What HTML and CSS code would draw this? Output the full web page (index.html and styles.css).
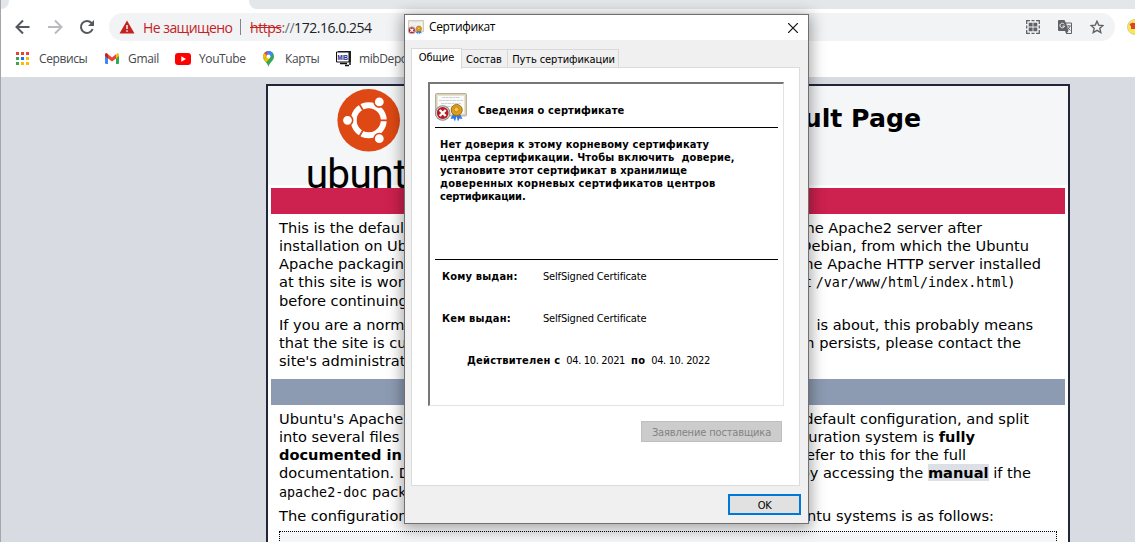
FILE: index.html
```
<!DOCTYPE html>
<html lang="ru">
<head>
<meta charset="utf-8">
<title>Сертификат</title>
<link rel="stylesheet" href="styles.css">
</head>
<body>
<svg width="0" height="0" class="defs">
  <symbol id="cert" viewBox="0 0 32 29">
    <rect x="0.5" y="0.5" width="31" height="22.5" rx="1" fill="#d9cfba" stroke="#b9ae98"/>
    <rect x="2.5" y="2.5" width="27" height="18.5" fill="#fbfbf8" stroke="#e8e2d2"/>
    <path d="M7 4.500h18M4 7.500h24M6 10.500h20M12 13.500h8" stroke="#ccd1dc" stroke-width="1" stroke-dasharray="3 .5"/>
    <path d="M18.500 20l-3 6 3-.5 1.500 3 2-7zM24.500 20l3 6-3-.5-1.500 3-2-7z" fill="#2f78e6"/>
    <circle cx="21.700" cy="17" r="5.500" fill="#dc9f22" stroke="#a66c0c"/>
    <circle cx="21.500" cy="16.500" r="2.500" fill="#f4c64c" stroke="#b67a12" stroke-width=".8"/>
    <circle cx="7.700" cy="20" r="7.700" fill="#8c8c8c"/>
    <circle cx="7.700" cy="20" r="6.800" fill="#dadada"/>
    <circle cx="7.700" cy="20" r="5.900" fill="#b81c24"/>
    <path d="M4.700 17l6 6M10.700 17l-6 6" stroke="#fff" stroke-width="2.400"/>
  </symbol>
</svg>
<div class="browser">
  <div class="tabstrip"><div class="tab-edge"></div><div class="tab-rest"></div></div>
  <div class="toolbar">
    <svg class="nav" width="16" height="16" viewBox="0 0 16 16" fill="none" stroke="#55595e" stroke-width="2"><path d="M14.500 8H2M8 1.500L1.500 8 8 14.500"/></svg>
    <svg class="nav" width="16" height="16" viewBox="0 0 16 16" fill="none" stroke="#b9bbbe" stroke-width="2"><path d="M1 8h12.500M8 1.500L14.500 8 8 14.500"/></svg>
    <svg class="nav" width="16" height="16" viewBox="0 0 16 16" fill="none" stroke="#55595e" stroke-width="2"><path d="M13.600 10A6 6 0 1 1 12.500 4L14 5.500"/><path d="M15 1v6H9z" fill="#55595e" stroke="none"/></svg>
    <div class="omnibox">
      <svg width="16" height="14" viewBox="0 0 16 14"><path d="M8 0.500L15.500 13.500H.5z" fill="#c5221f"/><path d="M8 5v4M8 10.300v1.500" stroke="#f1f3f4" stroke-width="1.500"/></svg>
      <span class="unsafe">Не защищено</span>
      <span class="sep"></span>
      <span class="url"><s>https</s><i>://</i>172.16.0.254</span>
      <span class="actions">
        <svg width="14" height="14" viewBox="0 0 14 14" fill="none" stroke="#5f6368"><path d="M.7 4V.7H4M5.500.7h3M10 .7h3.300V4M13.300 5.500v3M13.300 10v3.300H10M8.500 13.300h-3M4 13.300H.7V10M.7 8.500v-3" stroke-width="1.300"/><path d="M2.700 2.700h3.900v3.900H2.700zM7.400 2.700h3.900v3.900H7.400zM2.700 7.400h3.900v3.900H2.700zM7.400 7.400h3.900v3.900H7.400z" fill="#5f6368" stroke="none"/></svg>
        <svg width="14" height="14" viewBox="0 0 14 14"><path d="M1 0h5.500l1.200 2.500H13q1 0 1 1V13q0 1-1 1H8.200L7 11H1q-1 0-1-1V1q0-1 1-1z" fill="#5f6368"/><path d="M8.200 3.500H13V13H9l1.500-2z" fill="#f1f3f4"/><path d="M6.200 4.300A2.300 2.300 0 1 0 6.500 6H4.500" fill="none" stroke="#f1f3f4"/><path d="M8.800 6h4M10.800 5v1M12 6.200q-.6 2.400-2.600 3.600M9.700 7.200q1 2 2.800 3.200" fill="none" stroke="#5f6368" stroke-width=".9"/></svg>
        <svg width="14" height="14" viewBox="0 0 14 14"><path d="M7 1.200l1.700 3.900 4.300.4-3.200 2.800 1 4.200L7 10.300l-3.800 2.200 1-4.200L1 5.500l4.300-.4z" fill="none" stroke="#5f6368" stroke-width="1.400"/></svg>
      </span>
    </div>
    <svg class="ext" width="8" height="16" viewBox="0 0 8 16"><circle cx="8" cy="8" r="7.500" fill="#fbe94c" stroke="#d9cf94"/><path d="M3 6l2-1v5M7 4v6" stroke="#e0412f" stroke-width="2" fill="none"/></svg>
  </div>
  <div class="bookmarks">
    <span class="bm b1"><svg width="13" height="13" viewBox="0 0 13 13"><path d="M0 0h3v3H0zM5 0h3v3H5zM10 0h3v3h-3z" fill="#ea4335"/><path d="M0 5h3v3H0zM0 10h3v3H0z" fill="#34a853"/><path d="M5 5h3v3H5z" fill="#1a73e8"/><path d="M10 5h3v3h-3zM5 10h3v3H5zM10 10h3v3h-3z" fill="#fbbc04"/></svg>Сервисы</span>
    <span class="bm b2"><svg width="14" height="11" viewBox="0 0 14 11"><path d="M0 2v8q0 1 1 1h2V4z" fill="#4285f4"/><path d="M14 2v8q0 1-1 1h-2V4z" fill="#34a853"/><path d="M11 1.500L12 .5q2-1 2 1.500v1l-3 2.500z" fill="#fbbc04"/><path d="M0 3V2Q0-.5 2 .5l5 4 4-3.200v4.200L7 8.500z" fill="#ea4335"/><path d="M0 2Q0-.5 2 .5l1 .8v4.200L0 3z" fill="#c5221f"/></svg>Gmail</span>
    <span class="bm b3"><svg width="16" height="12" viewBox="0 0 16 12"><rect width="16" height="12" rx="3" fill="#f00"/><path d="M6.300 3.300v5.400L11 6z" fill="#fff"/></svg>YouTube</span>
    <span class="bm b4"><svg width="11" height="16" viewBox="0 0 11 16"><path d="M0 5.500a5.500 5.500 0 0 1 11 0C11 10 6.500 11 5.500 16 4.500 11 0 10 0 5.500z" fill="#34a853"/><path d="M0 5.500A5.500 5.500 0 0 1 1.500 2L4 4 1 8.500Q0 7 0 5.500z" fill="#fbbc04"/><path d="M1.300 2A5.500 5.500 0 0 1 4 .2L7 3 4 5z" fill="#ea4335"/><path d="M3.800.2a5.500 5.500 0 0 1 6.500 2.500L7 6 4 4z" fill="#4285f4"/><path d="M1 8.500L5 4l2 3-4 4.500z" fill="#fbbc04"/><circle cx="5.500" cy="5.500" r="2" fill="#fff"/></svg>Карты</span>
    <span class="bm b5"><svg width="16" height="16" viewBox="0 0 16 16"><path d="M2 0h13v11H2z" fill="#222"/><path d="M.5 1h12.500v10H.5z" fill="#fff" stroke="#111"/><text x="1.500" y="9.300" class="mib" textLength="10.500" lengthAdjust="spacingAndGlyphs">MIB</text><path d="M4 12.500h7M9 14.500h4M14 11v3" stroke="#111" stroke-width="1.500"/></svg>mibDepo</span>
  </div>
  <div class="viewport">
    <main class="page">
      <header class="head">
        <svg class="logo" width="105" height="102" viewBox="0 0 105 102">
          <circle cx="66.700" cy="34.300" r="31.300" fill="#dd4814"/>
          <circle cx="66.700" cy="34.300" r="15" fill="none" stroke="#fff" stroke-width="6"/>
          <path d="M66.700 34.300H88M66.700 34.300L56 15.800M66.700 34.300L56 52.800" stroke="#dd4814" stroke-width="1.700"/>
          <circle cx="66.700" cy="34.300" r="11.600" fill="#dd4814"/>
          <g fill="#fff" stroke="#dd4814" stroke-width="1.600"><circle cx="45.500" cy="34.300" r="5.200"/><circle cx="77.300" cy="15.900" r="5.200"/><circle cx="77.300" cy="52.700" r="5.200"/></g>
          <text class="word" x="3.800 25.300 47.500 69.200 91.500" y="101.500">ubunt</text>
        </svg>
        <h1>Default Page</h1>
      </header>
      <div class="bar red"></div>
      <section>
        <p><span class="l e981"><b>This is the default</b><b>the Apache2 server after</b></span>
        <span class="l e1028"><b>installation on Ubuntu</b><b>Debian, from which the Ubuntu</b></span>
        <span class="l e1040"><b>Apache packaging is</b><b>the Apache HTTP server installed</b></span>
        <span class="l e1014"><b>at this site is working</b><b>at <code>/var/www/html/index.html</code>)</b></span>
        <span class="l low"><b>before continuing to</b></span></p>
        <p><span class="l e1032"><b>If you are a normal</b><b>is about, this probably means</b></span>
        <span class="l e1020"><b>that the site is currently</b><b>problem persists, please contact the</b></span>
        <span class="l"><b>site's administrator</b></span></p>
      </section>
      <div class="bar slate"></div>
      <section>
        <p><span class="l e1028"><b>Ubuntu's Apache2</b><b>default configuration, and split</b></span>
        <span class="l e974"><b>into several files op</b><b>configuration system is <strong>fully</strong></b></span>
        <span class="l e965"><b><strong>documented in</strong></b><b>Refer to this for the full</b></span>
        <span class="l e1030"><b>documentation. Do</b><b>by accessing the <mark>manual</mark> if the</b></span>
        <span class="l low"><b><code>apache2-doc</code> package</b></span></p>
        <p><span class="l e993"><b>The configuration lay</b><b>Ubuntu systems is as follows:</b></span></p>
      </section>
      <div class="listing"></div>
    </main>
  </div>
</div>

<div class="dialog">
  <div class="title"><svg width="16" height="15"><use href="#cert"/></svg><span>Сертификат</span>
    <svg class="close" width="10" height="10" viewBox="0 0 10 10"><path d="M0 0l10 10M10 0L0 10" stroke="#111" stroke-width="1.200"/></svg></div>
  <div class="tabs"><span class="tab on">Общие</span><span class="tab two">Состав</span><span class="tab three">Путь сертификации</span></div>
  <div class="panel">
    <div class="frame">
      <div class="info"><svg width="32" height="29"><use href="#cert"/></svg><span>Сведения о сертификате</span></div>
      <div class="message"><span class="m1">Нет доверия к этому корневому сертификату</span><span class="m2">центра сертификации. Чтобы включить&nbsp; доверие,</span><span class="m3">установите этот сертификат в хранилище</span><span class="m4">доверенных корневых сертификатов центров</span><span class="m5">сертификации.</span></div>
      <div class="field"><strong>Кому выдан:</strong><span>SelfSigned Certificate</span></div>
      <div class="field"><strong>Кем выдан:</strong><span>SelfSigned Certificate</span></div>
      <div class="dates"><strong>Действителен с</strong><span>04. 10. 2021</span><strong>по</strong><span>04. 10. 2022</span></div>
    </div>
    <div class="issuer">Заявление поставщика</div>
  </div>
  <div class="ok">OK</div>
</div>
</body>
</html>
```
FILE: styles.css
```
* { box-sizing: border-box; }
body { margin: 0; width: 1135px; height: 542px; overflow: hidden; position: relative; background: #fff; }
.defs { position: absolute; }
.browser { height: 542px; overflow: hidden; border-left: 1px solid #a6a6a6; font-family: "Open Sans", sans-serif; }
.tabstrip { height: 9px; display: flex; justify-content: space-between; }
.tab-edge { width: 8px; background: #e4e7ea; border-bottom-right-radius: 8px; }
.tab-rest { width: 886px; background: #e4e7ea; border-bottom-left-radius: 8px; }
.toolbar { height: 36px; display: flex; align-items: center; padding-left: 14px; }
.nav { margin-right: 16px; flex: none; }
.omnibox { width: 1006px; height: 28px; border-radius: 14px; background: #f1f3f4; display: flex; align-items: center; flex: none; padding: 0 11px 0 10px; margin-left: -2px; font-size: 14px; color: #202124; white-space: nowrap; }
.unsafe { color: #c5221f; margin-left: 8px; width: 89px; letter-spacing: -.55px; }
.sep { width: 1px; height: 16px; background: #80868b; margin: 0 9px 0 8px; }
.url { letter-spacing: -.46px; }
.url s { color: #c5221f; }
.url i { font-style: normal; color: #6c7075; }
.actions { margin-left: auto; display: flex; gap: 18px; }
.ext { margin-left: auto; flex: none; }
.bookmarks { height: 32px; padding: 0 0 5px 15px; display: flex; align-items: center; font-size: 12px; letter-spacing: -.4px; color: #45484d; white-space: nowrap; }
.bm { display: flex; align-items: center; flex: none; }
.b1 { width: 89px; gap: 10px; }
.b2 { width: 70px; gap: 9px; letter-spacing: -.3px; }
.b3 { width: 88px; gap: 8px; }
.b4 { width: 73px; gap: 11px; }
.b5 { gap: 7px; }
.mib { font: bold 8px "Liberation Sans", sans-serif; fill: #1c1c90; letter-spacing: 0; }
.viewport { height: 465px; background: #d8dbe2; padding: 7px 65px 0 265px; }
.page { width: 804px; height: 480px; border: 2px solid #212738; background: #fff; font-family: "DejaVu Sans", sans-serif; font-size: 14.6px; color: #000; }
.head { height: 99px; background: #f5f6f7; display: flex; justify-content: space-between; }
.logo { margin-left: 34px; overflow: visible; }
.word { font: 40.5px Roboto, sans-serif; }
h1 { margin: 17px 147px 0 0; font-size: 25.2px; line-height: 32px; }
.bar { height: 26px; margin: 3px 3px 0; }
.red { background: #cd214f; }
.slate { background: #8d9bb2; margin-top: 9px; }
section { padding: 5px 11px 0; }
p { margin: 0 0 6px; }
.l { display: flex; justify-content: space-between; height: 18px; line-height: 18px; white-space: nowrap; }
.l b { font-weight: normal; white-space: pre; }
.low { height: 19px; line-height: 19px; }
.e981 { width: 703px; } .e1028 { width: 750px; } .e1040 { width: 762px; } .e1014 { width: 735px; }
.e1032 { width: 754px; } .e1020 { width: 742px; } .e974 { width: 696px; } .e965 { width: 687px; }
.e1030 { width: 752px; } .e993 { width: 715px; }
code { font: 13.33px "DejaVu Sans Mono", monospace; }
strong { font-weight: bold; }
mark { background: #dcdfe6; color: #000; font-weight: bold; }
.listing { height: 40px; margin: 2px 11px 0; border: 1px dotted #000; background: #f5f6f7; }

.dialog { position: absolute; left: 404px; top: 14px; width: 405px; height: 510px; border: 1px solid #707070; background: #f0f0f0; box-shadow: 0 3px 14px 2px rgba(0,0,0,.36); font-family: "DejaVu Sans Condensed", "DejaVu Sans", sans-serif; font-stretch: condensed; font-size: 11px; color: #000; white-space: nowrap; }
.title { height: 25px; background: #fff; display: flex; align-items: center; padding: 0 10px 0 3px; font: 12px "Open Sans", sans-serif; letter-spacing: -.35px; }
.title span { margin: -2px 0 0 5px; }
.close { margin-left: auto; }
.tabs { display: flex; align-items: flex-end; height: 28px; padding-left: 6px; }
.tab { height: 19px; border: 1px solid #d9d9d9; border-left: 0; border-bottom: 0; line-height: 20px; text-align: center; letter-spacing: -.05px; }
.on { height: 21px; width: 51px; border-left: 1px solid #d9d9d9; background: #fff; margin-bottom: -1px; position: relative; line-height: 18px; }
.two { width: 46px; padding-right: 1px; }
.three { width: 111px; letter-spacing: -.12px; padding-left: 1px; }
.panel { margin-left: 6px; width: 389px; height: 419px; margin-top: -1px; border: 1px solid #dcdcdc; background: #fff; padding: 14px 0 0 16px; }
.frame { width: 356px; height: 324px; border: 1px solid #e3e3e3; border-top: 2px solid #777; border-left: 2px solid #777; padding: 9px 5px 0; }
.info { height: 35px; display: flex; border-bottom: 1px solid #000; font-weight: bold; letter-spacing: .12px; }
.info span { margin: 11px 0 0 11px; }
.message { height: 132px; padding: 10px 0 0 5px; border-bottom: 1px solid #000; font-weight: bold; line-height: 13px; display: flex; flex-direction: column; align-items: flex-start; }
.m1 { letter-spacing: .17px; } .m2 { letter-spacing: .12px; } .m3 { letter-spacing: .13px; } .m4 { letter-spacing: .27px; } .m5 { letter-spacing: -.15px; }
.field { display: flex; height: 42px; padding: 10px 0 0 7px; line-height: 14px; }
.field strong { width: 101px; letter-spacing: .18px; }
.field span { letter-spacing: -.17px; }
.dates { display: flex; padding: 10px 0 0 32px; line-height: 14px; gap: 6px; }
.dates strong { letter-spacing: .25px; }
.dates span { letter-spacing: -.35px; }
.issuer { margin: 15px 0 0 213px; width: 141px; height: 21px; border: 1px solid #bfbfbf; background: #ccc; color: #838383; text-align: center; line-height: 21px; letter-spacing: -.15px; }
.ok { margin: 8px 0 0 323px; width: 73px; height: 21px; border: 2px solid #0078d7; background: #e1e1e1; text-align: center; line-height: 19px; letter-spacing: -.3px; }
```
